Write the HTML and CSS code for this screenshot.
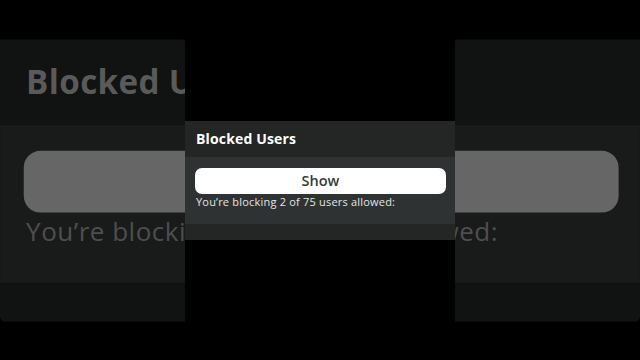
FILE: index.html
```html
<!DOCTYPE html>
<html lang="en">
<head>
<meta charset="utf-8">
<title>Blocked Users</title>
<link rel="stylesheet" href="styles.css">
</head>
<body>
<div class="stage">
  <section class="panel panel--backdrop" aria-hidden="true">
    <header class="panel__head"><h2 class="panel__title">Blocked Users</h2></header>
    <div class="panel__body">
      <button class="panel__btn" tabindex="-1">Show</button>
      <p class="panel__note">You’re blocking 2 of 75 users allowed:</p>
    </div>
    <div class="panel__foot"></div>
  </section>
  <div class="strip"></div>
  <section class="panel panel--front">
    <header class="panel__head"><h2 class="panel__title">Blocked Users</h2></header>
    <div class="panel__body">
      <button class="panel__btn">Show</button>
      <p class="panel__note">You’re blocking 2 of 75 users allowed:</p>
    </div>
    <div class="panel__foot"></div>
  </section>
</div>
</body>
</html>
```

FILE: styles.css
```css
* { box-sizing: border-box; }
html, body { margin: 0; padding: 0; background: #000; }
body { width: 640px; height: 360px; overflow: hidden; font-family: "Open Sans", "Noto Sans", sans-serif; }

.stage {
  width: 640px;
  height: 360px;
  display: grid;
  place-items: center;
  overflow: hidden;
}
.stage > * { grid-area: 1 / 1; }

.strip { width: 270px; height: 360px; background: #000; z-index: 1; }

.panel {
  width: 270px;
  display: flex;
  flex-direction: column;
  color: #fff;
}
.panel--front { z-index: 2; }
.panel__head {
  height: 36px;
  background: #242626;
  padding: 10px 11px 0;
}
.panel__title {
  margin: 0;
  font-size: 14px;
  font-weight: 700;
  line-height: 16px;
  letter-spacing: 0.15px;
}
.panel__body {
  height: 67px;
  background: #2f3232;
  padding: 11px 9px 0 10px;
  display: flex;
  flex-direction: column;
}
.panel__btn {
  height: 26px;
  border: 0;
  border-radius: 7px;
  background: #fff;
  color: #36393b;
  font-family: inherit;
  font-size: 14.5px;
  font-weight: 600;
  padding: 0;
}
.panel__note {
  margin: 1px 0 0 1px;
  font-size: 11px;
  line-height: 13px;
  letter-spacing: 0.2px;
  color: #e4e4e4;
}
.panel__foot { height: 16px; background: #242626; }

.panel--backdrop { transform: scale(2.37); z-index: 0; }
.panel--backdrop .panel__head { background: #111212; }
.panel--backdrop .panel__title { color: #5a5a5a; }
.panel--backdrop .panel__body { background: #191a1a; }
.panel--backdrop .panel__btn { background: #666; color: #666; }
.panel--backdrop .panel__note { color: #4e4e4e; }
.panel--backdrop .panel__foot { background: #111212; border-radius: 0 0 2px 2px; }
```
